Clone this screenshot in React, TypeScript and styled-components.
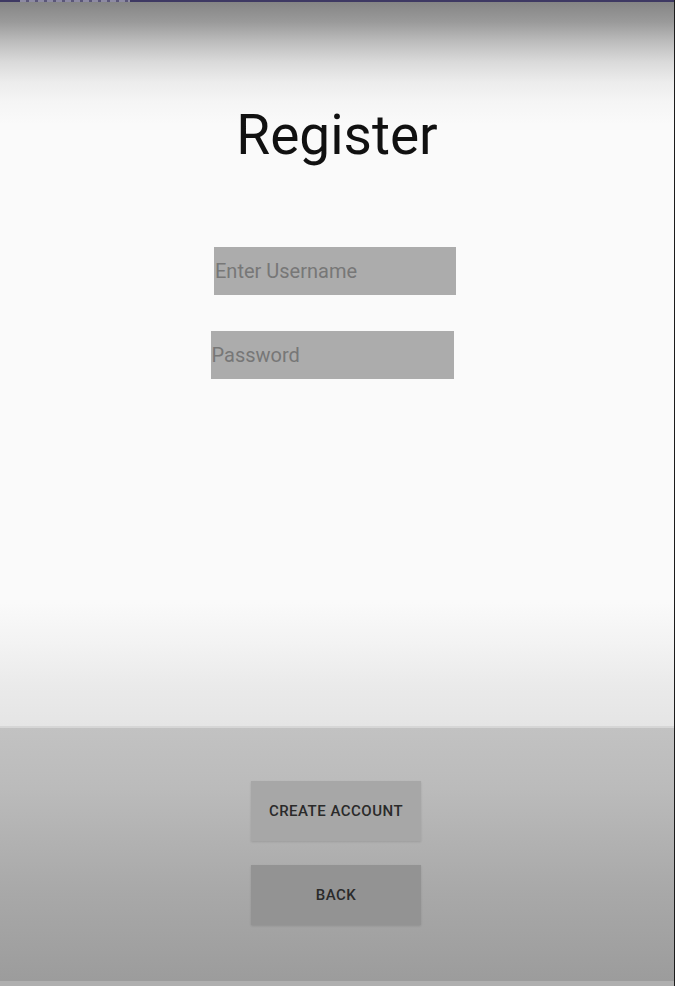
import React from "react";
import styled, { createGlobalStyle } from "styled-components";

const Global = createGlobalStyle`
  html, body { margin: 0; padding: 0; background: #fafafa; }
  body { font-family: Roboto, "Noto Sans", sans-serif; }
  #root { width: 675px; height: 986px; }
`;

const Screen = styled.div`
  width: 675px;
  height: 986px;
  box-sizing: border-box;
  border-right: 1px solid #1c1c1c;
  display: flex;
  flex-direction: column;
  overflow: hidden;
`;

const WindowBar = styled.div`
  height: 2px;
  flex: none;
  background: #3e3963;
  display: flex;
  padding-left: 20px;
`;

const WindowTab = styled.div`
  width: 110px;
  height: 2px;
  background: repeating-linear-gradient(to right, #8d8aa3 0px, #8d8aa3 6px, #5a5679 6px, #5a5679 9px);
`;

const Main = styled.main`
  height: 724px;
  flex: none;
  box-sizing: border-box;
  padding-top: 101px;
  display: flex;
  flex-direction: column;
  align-items: center;
  background:
    linear-gradient(to bottom, #858585 0px, #9a9a9a 20px, #bdbdbd 40px, #dadada 60px, #ececec 80px, #f5f5f5 100px, rgba(250,250,250,0) 122px),
    linear-gradient(to bottom, #fafafa 0px, #fafafa 600px, #f3f3f3 640px, #eaeaea 684px, #e5e5e5 724px);
`;

const Title = styled.h1`
  margin: 0;
  font-family: Roboto, sans-serif;
  font-weight: 400;
  font-size: 55px;
  line-height: 64px;
  color: #111;
`;

const Fields = styled.div`
  margin-top: 80px;
  display: flex;
  flex-direction: column;
  align-items: center;
  gap: 36px;
`;

const Field = styled.input<{ $shift: number; $w: number }>`
  box-sizing: border-box;
  width: ${(p) => p.$w}px;
  height: 48px;
  border: none;
  outline: none;
  background: #acacac;
  padding: 0 0 0 1px;
  margin: 0;
  font-family: Roboto, sans-serif;
  font-size: 20px;
  color: #333;
  transform: translateX(${(p) => p.$shift}px);
  &::placeholder { color: #777777; }
`;

const Divider = styled.div`
  height: 2px;
  flex: none;
  background: #d6d6d6;
`;

const Panel = styled.section`
  height: 253px;
  flex: none;
  box-sizing: border-box;
  padding-top: 53px;
  display: flex;
  flex-direction: column;
  align-items: center;
  gap: 24px;
  background: linear-gradient(to bottom, #c2c2c2 0px, #bbbbbb 60px, #a9a9a9 160px, #9c9c9c 253px);
`;

const Button = styled.button<{ $tone: string }>`
  width: 170px;
  height: 60px;
  border: none;
  margin: 0;
  padding: 0;
  background: ${(p) => p.$tone};
  box-shadow: 0 1px 2px rgba(0,0,0,0.12);
  font-family: Roboto, sans-serif;
  font-weight: 500;
  font-size: 15px;
  letter-spacing: 0.5px;
  color: #2a2a2a;
  text-transform: uppercase;
  transform: translateX(-1px);
`;

const BottomStrip = styled.div`
  flex: 1;
  background: #afafaf;
`;

export default function App() {
  return (
    <>
      <Global />
      <Screen>
        <WindowBar>
          <WindowTab />
        </WindowBar>
        <Main>
          <Title>Register</Title>
          <Fields>
            <Field $w={242} $shift={-2} placeholder="Enter Username" />
            <Field $w={243} $shift={-5} placeholder="Password" type="password" />
          </Fields>
        </Main>
        <Divider />
        <Panel>
          <Button $tone="#a7a7a7">Create Account</Button>
          <Button $tone="#939393">Back</Button>
        </Panel>
        <BottomStrip />
      </Screen>
    </>
  );
}
